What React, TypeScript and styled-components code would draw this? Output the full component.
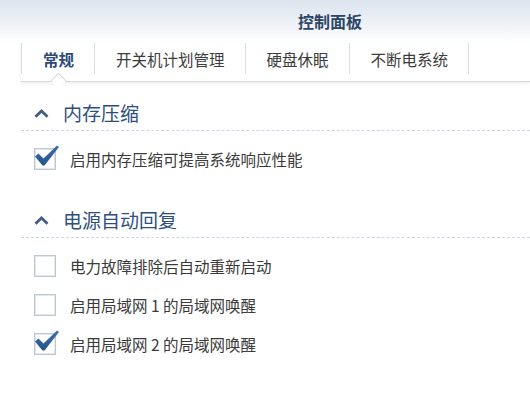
import styled, { createGlobalStyle } from 'styled-components'

const GlobalStyle = createGlobalStyle`
  html, body {
    margin: 0;
    padding: 0;
    background: #ffffff;
  }
  body {
    font-family: "Noto Sans CJK SC", "Noto Sans", sans-serif;
  }
`

const tabs = ['常规', '开关机计划管理', '硬盘休眠', '不断电系统']

const sections = [
  {
    title: '内存压缩',
    items: [{ label: '启用内存压缩可提高系统响应性能', checked: true }],
  },
  {
    title: '电源自动回复',
    items: [
      { label: '电力故障排除后自动重新启动', checked: false },
      { label: '启用局域网 1 的局域网唤醒', checked: false },
      { label: '启用局域网 2 的局域网唤醒', checked: true },
    ],
  },
]

const Chevron = () => (
  <svg width="15" height="9" viewBox="0 0 15 9">
    <polyline points="1.5,7.8 7.5,2 13.5,7.8" fill="none" stroke="#3e5d87" strokeWidth="2.7" />
  </svg>
)

const Tick = () => (
  <TickSvg width="26" height="24" viewBox="0 0 26 24">
    <defs>
      <linearGradient id="tk" x1="0" y1="0" x2="0" y2="1">
        <stop offset="0" stopColor="#3f6fab" />
        <stop offset="1" stopColor="#24528c" />
      </linearGradient>
    </defs>
    <polygon points="1,12.5 4.5,9.5 9.5,14.5 23,1.5 25,3 10.5,21.5 8.5,21.5" fill="url(#tk)" />
  </TickSvg>
)

export default function App() {
  return (
    <Page>
      <GlobalStyle />
      <Header>
        <Title>控制面板</Title>
      </Header>
      <TabBar>
        {tabs.map((t, i) => (
          <Tab key={t} $active={i === 0}>
            {t}
            {i === 0 && <Notch />}
          </Tab>
        ))}
      </TabBar>
      <Content>
        {sections.map((s) => (
          <Section key={s.title}>
            <SectionHead>
              <Chevron />
              <SectionTitle>{s.title}</SectionTitle>
            </SectionHead>
            <SectionBody>
              {s.items.map((it) => (
                <Row key={it.label}>
                  <Box>{it.checked && <Tick />}</Box>
                  <Label>{it.label}</Label>
                </Row>
              ))}
            </SectionBody>
          </Section>
        ))}
      </Content>
    </Page>
  )
}

const Page = styled.div`
  width: 530px;
  height: 395px;
  background: #fff;
  overflow: hidden;
`

const Header = styled.div`
  height: 43px;
  display: flex;
  align-items: center;
  justify-content: center;
  padding-left: 130px;
  background: linear-gradient(180deg, #dde4ee 0%, #eef2f7 55%, #ffffff 100%);
`

const Title = styled.div`
  font-size: 16px;
  font-weight: 700;
  color: #2d4568;
  margin-top: -2px;
`

const TabBar = styled.div`
  display: flex;
  margin-left: 21px;
  padding-bottom: 7px;
  border-bottom: 1px solid #d3d7dc;
  box-shadow: 0 2px 3px rgba(0, 0, 0, 0.06);
`

const Tab = styled.div<{ $active?: boolean }>`
  position: relative;
  height: 31px;
  display: flex;
  align-items: center;
  padding: 0 20px 0 21px;
  border-left: 1px solid #d6dde6;
  font-size: 15.5px;
  font-weight: ${(p) => (p.$active ? 700 : 400)};
  color: ${(p) => (p.$active ? '#2b4a77' : '#3c3c3c')};
  &:last-child {
    border-right: 1px solid #d6dde6;
  }
`

const Notch = styled.span`
  position: absolute;
  left: 31px;
  bottom: -12px;
  width: 10px;
  height: 10px;
  background: #fff;
  border-left: 1px solid #d3d7dc;
  border-top: 1px solid #d3d7dc;
  transform: rotate(45deg);
`

const Content = styled.div`
  padding-left: 21px;
  padding-top: 14px;
`

const Section = styled.div`
  margin-bottom: 25px;
`

const SectionHead = styled.div`
  height: 34px;
  display: flex;
  align-items: center;
  gap: 14px;
  padding-left: 13px;
  border-bottom: 1px dashed #c9d7e6;
`

const SectionTitle = styled.div`
  font-size: 19px;
  color: #2e4f7d;
  margin-top: -1px;
`

const SectionBody = styled.div`
  padding-top: 8px;
`

const Row = styled.div`
  height: 39px;
  display: flex;
  align-items: center;
  gap: 14px;
  padding-left: 13px;
`

const Box = styled.div`
  position: relative;
  width: 20px;
  height: 20px;
  border: 1px solid #bcc7d3;
  box-shadow: inset 0 0 0 1px #e3e8ee;
  background: #fff;
`

const TickSvg = styled.svg`
  position: absolute;
  left: -1px;
  top: -5px;
`

const Label = styled.div`
  font-size: 15.5px;
  color: #3a3a3a;
`
